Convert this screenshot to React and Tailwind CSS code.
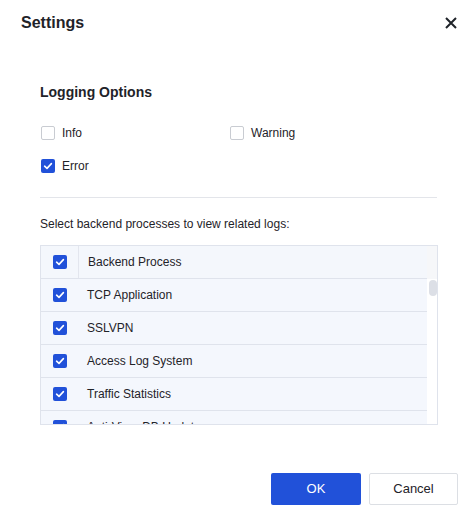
import React from 'react';

const PROCESSES = [
  'TCP Application',
  'SSLVPN',
  'Access Log System',
  'Traffic Statistics',
  'Anti-Virus DB Update',
];

function Check({ checked }) {
  if (checked) {
    return (
      <span className="w-[14px] h-[14px] rounded-[2px] bg-[#2151d9] flex items-center justify-center shrink-0">
        <svg width="10" height="10" viewBox="0 0 10 10" fill="none">
          <path d="M1.6 5.2 L4 7.4 L8.4 2.6" stroke="#fff" strokeWidth="1.6" strokeLinecap="round" strokeLinejoin="round" />
        </svg>
      </span>
    );
  }
  return <span className="w-[14px] h-[14px] rounded-[2px] border border-[#c9ccd2] bg-white shrink-0" />;
}

function Option({ label, checked }) {
  return (
    <label className="flex items-center gap-[7px] text-[12px] text-[#1f2329]">
      <Check checked={checked} />
      <span>{label}</span>
    </label>
  );
}

export default function App() {
  return (
    <div className="w-[472px] h-[520px] bg-white relative font-['Liberation_Sans',Arial,sans-serif] text-[#1f2329]">
      <div className="h-[46px] flex items-center justify-between pl-[21px] pr-[15px]">
        <h1 className="text-[16px] font-bold">Settings</h1>
        <svg width="12" height="12" viewBox="0 0 12 12">
          <path d="M1 1 L11 11 M11 1 L1 11" stroke="#1f2329" strokeWidth="2" />
        </svg>
      </div>

      <div className="pl-[40px] pr-[34px] pt-[37px]">
        <h2 className="text-[14px] font-bold leading-[18px]">Logging Options</h2>

        <div className="grid grid-cols-[189px_1fr] gap-y-[15px] mt-[23px] pl-[1px]">
          <Option label="Info" />
          <Option label="Warning" />
          <Option label="Error" checked />
        </div>

        <div className="h-px bg-[#e3e5ea] mt-[22px] mr-px" />

        <p className="text-[12px] mt-[19px] leading-[14px]">Select backend processes to view related logs:</p>

        <div className="mt-[14px] border border-[#dfe3ec] h-[180px] flex overflow-hidden">
          <div className="flex-1 min-w-0">
            <div className="h-[33px] bg-[#f4f7fc] border-b border-[#dfe3ec] flex items-center text-[12px]">
              <div className="w-[38px] h-full flex items-center pl-[12px] border-r border-[#e3e6ee]">
                <Check checked />
              </div>
              <span className="pl-[9px]">Backend Process</span>
            </div>
            {PROCESSES.map(p => (
              <div key={p} className="h-[33px] bg-[#f4f7fd] border-b border-[#dfe3ec] flex items-center text-[12px]">
                <div className="w-[38px] flex items-center pl-[12px]">
                  <Check checked />
                </div>
                <span className="pl-[8px] whitespace-nowrap">{p}</span>
              </div>
            ))}
          </div>
          <div className="w-[10px] shrink-0 bg-white flex flex-col">
            <div className="h-[33px] bg-[#f6f7f9]" />
            <div className="w-[8px] h-[16px] rounded-[4px] bg-[#dcdfe6] ml-[2px] mt-px" />
          </div>
        </div>
      </div>

      <div className="absolute left-[271px] top-[473px] flex gap-[8px]">
        <button className="w-[90px] h-[32px] rounded-[2px] bg-[#2151d9] text-white text-[13px]">OK</button>
        <button className="w-[89px] h-[32px] rounded-[2px] border border-[#dcdfe4] bg-white text-[13px] text-[#1f2329]">Cancel</button>
      </div>
    </div>
  );
}
